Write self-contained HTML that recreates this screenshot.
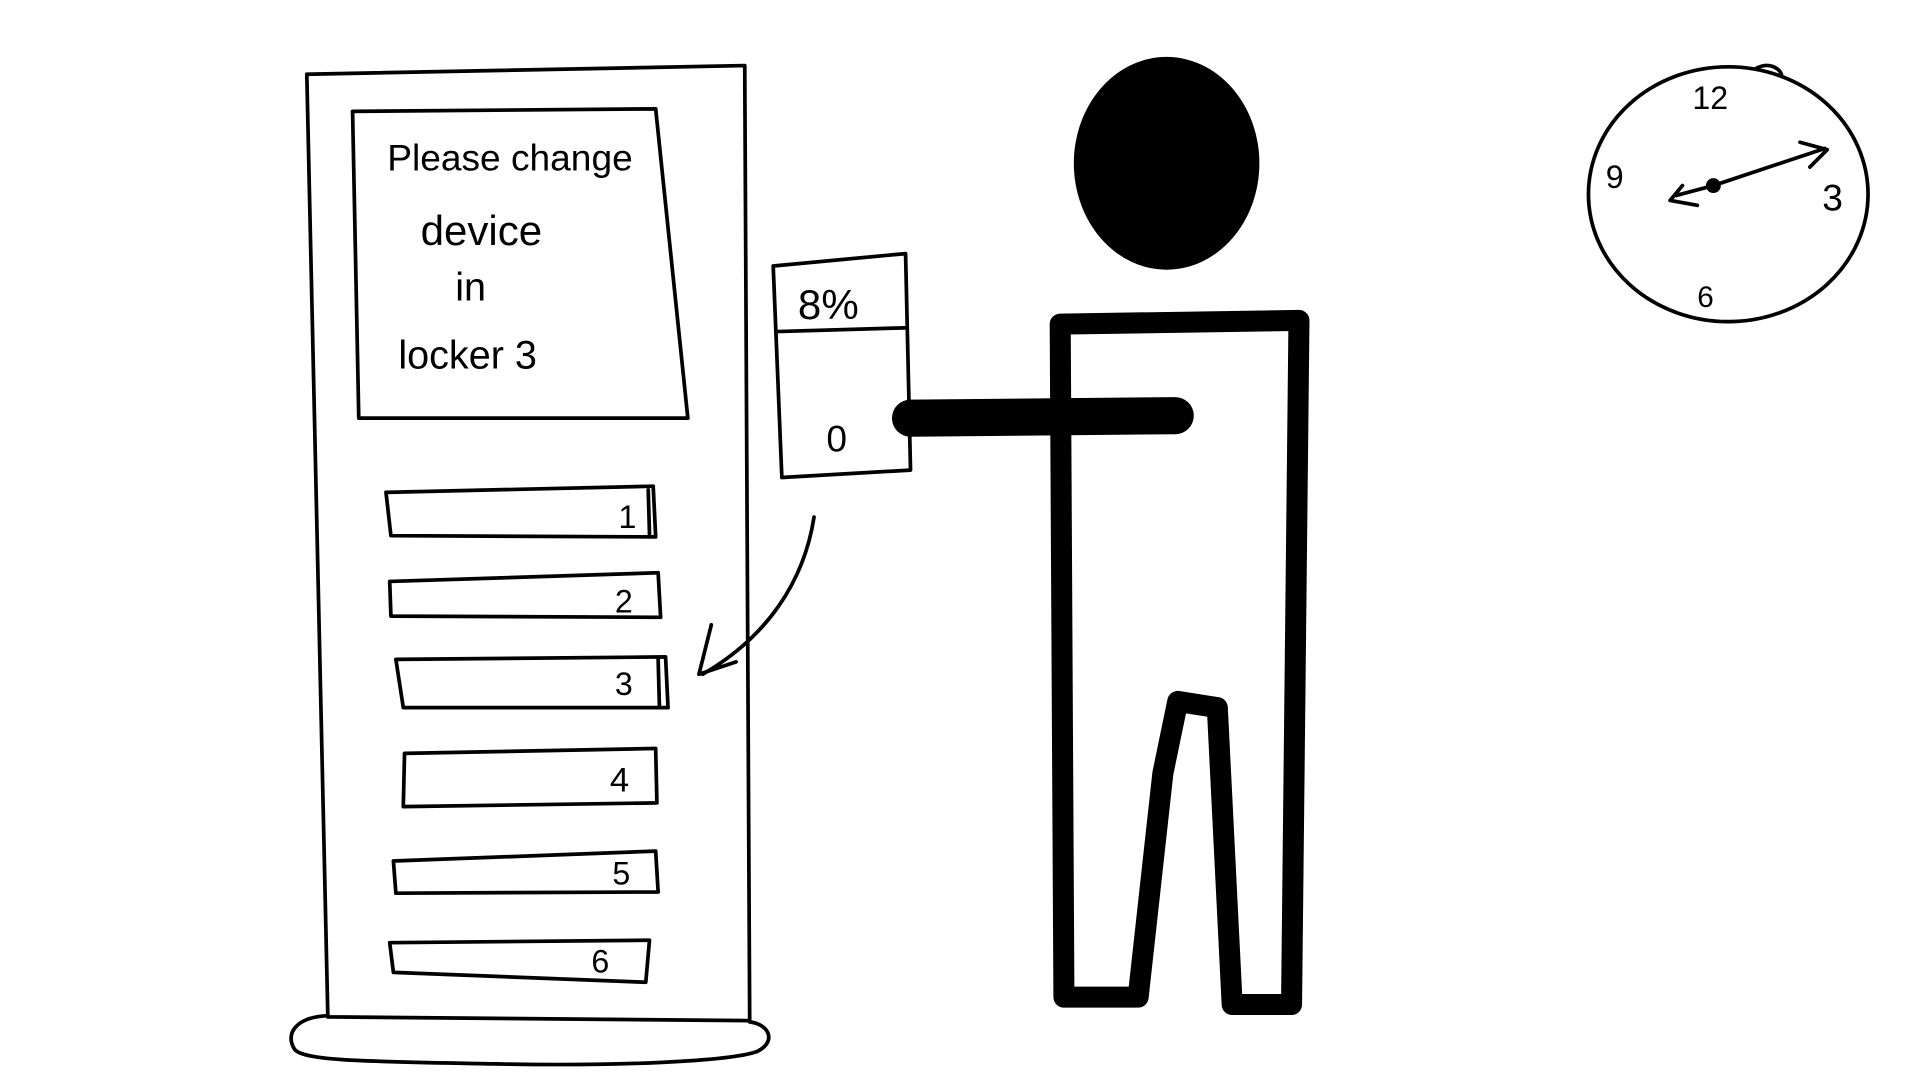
<!DOCTYPE html>
<html><head><meta charset="utf-8"><style>
html,body{margin:0;padding:0;background:#fff;width:1920px;height:1080px;overflow:hidden}
svg{display:block}
text{font-family:"Liberation Sans",sans-serif;fill:#000}
</style></head><body>
<svg width="1920" height="1080" viewBox="0 0 1552 873" preserveAspectRatio="none" xmlns="http://www.w3.org/2000/svg">
<rect width="1552" height="873" fill="#fff"/>
<g fill="none" stroke="#000" stroke-width="3" stroke-linejoin="round" stroke-linecap="round">
<!-- locker -->
<path d="M248,60 L602,53 L606,825 L265,822 Z"/>
<path d="M265,821 C240,822 230,835 238,848 C245,858 300,858 400,860 C500,862 590,858 612,850 C628,842 622,828 606,826"/>
<!-- screen -->
<path d="M285,90 L530,88 L556,338 L290,338 Z"/>
<!-- slots -->
<path d="M312,398 L528,393 L530,434 L316,433 Z"/><path d="M524,396 L525,432"/>
<path d="M315,470 L532,463 L534,499 L316,498 Z"/>
<path d="M320,533 L538,531 L540,572 L326,572 Z"/><path d="M532,533 L533,570"/>
<path d="M327,609 L530,605 L531,649 L326,652 Z"/>
<path d="M318,696 L530,688 L532,721 L320,722 Z"/>
<path d="M315,762 L525,760 L522,794 L318,786 Z"/>
<!-- phone -->
<path d="M625,215 L732,205 L736,380 L632,386 Z"/>
<path d="M628,268 L731,265"/>
<!-- arrow -->
<path d="M658,418 C650,470 620,515 568,545"/>
<path d="M575,505 L565,545 L595,535"/>
<!-- clock -->
<ellipse cx="1397" cy="157" rx="113" ry="103"/>
<path d="M1420,55 C1430,50 1438,55 1440,60"/>
<path d="M1385,150 L1475,120 M1455,115 L1477,121 L1463,135"/>
<path d="M1385,150 L1355,158 M1360,150 L1350,162 L1372,166"/>
</g>
<circle cx="1385" cy="150" r="6" fill="#000"/>
<!-- arm -->
<path d="M736,338 L950,336" stroke="#000" stroke-width="30" stroke-linecap="round"/>
<!-- head -->
<ellipse cx="943" cy="132" rx="75" ry="86" fill="#000"/>
<!-- body -->
<path d="M857,262 L1050,259 L1044,812 L996,812 L984,572 L952,567 L940,625 L920,806 L860,806 Z" fill="none" stroke="#000" stroke-width="17" stroke-linejoin="round"/>
<!-- texts -->
<text x="313" y="138" font-size="30">Please change</text>
<text x="340" y="198" font-size="34">device</text>
<text x="368" y="243" font-size="32">in</text>
<text x="322" y="298" font-size="32">locker 3</text>
<text x="500" y="427" font-size="26">1</text>
<text x="497" y="495" font-size="26">2</text>
<text x="497" y="562" font-size="26">3</text>
<text x="493" y="640" font-size="28">4</text>
<text x="495" y="715" font-size="26">5</text>
<text x="478" y="786" font-size="26">6</text>
<text x="645" y="258" font-size="34">8%</text>
<text x="668" y="365" font-size="30">0</text>
<text x="1368" y="88" font-size="26">12</text>
<text x="1298" y="152" font-size="26">9</text>
<text x="1473" y="170" font-size="30">3</text>
<text x="1372" y="248" font-size="24">6</text>
</svg>
</body></html>
